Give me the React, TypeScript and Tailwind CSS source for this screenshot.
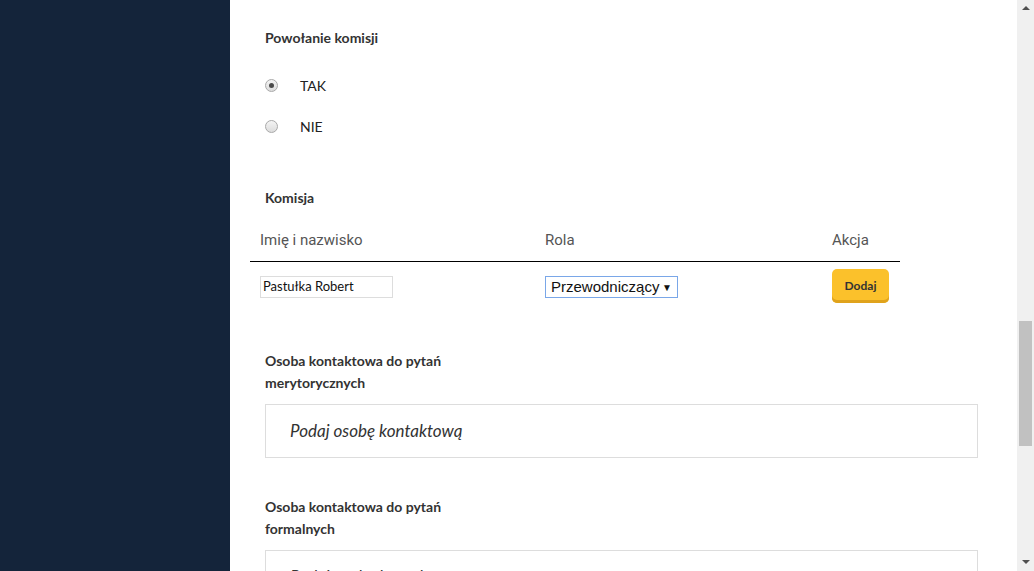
import React from "react";

const Radio = ({ checked }: { checked?: boolean }) => (
  <span className="flex h-[13px] w-[13px] items-center justify-center rounded-full border border-[#a9a9a9] bg-gradient-to-b from-[#f4f4f4] to-[#dcdcdc]">
    {checked ? <span className="h-[5px] w-[5px] rounded-full bg-[#4a4a4a]" /> : null}
  </span>
);

const ContactField = ({ label }: { label: string }) => (
  <div className="flex flex-col">
    <div className="w-[200px] text-[14px] font-bold leading-[22px] text-[#333]">{label}</div>
    <div className="mt-[10px] flex h-[54px] items-center border border-[#dddddd] pl-[24px] text-[17px] italic text-[#333]">
      Podaj osobę kontaktową
    </div>
  </div>
);

const App = () => {
  return (
    <div className="flex h-[571px] w-full overflow-hidden bg-white font-['Lato',sans-serif]">
      <aside className="w-[230px] shrink-0 bg-[#14243a]" />

      <main className="flex flex-1 flex-col pl-[35px] pr-[39px] pt-[29px]">
        <div className="text-[14px] font-bold leading-[18px] text-[#333]">Powołanie komisji</div>

        <div className="mt-[29px] flex flex-col gap-[23px]">
          <label className="flex h-[18px] items-center">
            <Radio checked />
            <span className="ml-[22px] text-[14px] text-[#222]">TAK</span>
          </label>
          <label className="flex h-[18px] items-center">
            <Radio />
            <span className="ml-[22px] text-[14px] text-[#222]">NIE</span>
          </label>
        </div>

        <div className="mt-[54px] text-[14px] font-bold leading-[18px] text-[#333]">Komisja</div>

        <div className="-ml-[15px] mt-[12px] w-[650px]">
          <div className="grid h-[43px] grid-cols-[285px_287px_78px] items-center border-b border-black pl-[10px] font-['Roboto',sans-serif] text-[15px] text-[#555]">
            <span>Imię i nazwisko</span>
            <span>Rola</span>
            <span>Akcja</span>
          </div>
          <div className="grid grid-cols-[285px_287px_78px] items-start pl-[10px] pt-[7px]">
            <div className="mt-[7px] flex h-[22px] w-[133px] items-center border border-[#dddddd] pl-[2px] text-[13px] text-[#111]">
              Pastułka Robert
            </div>
            <div className="mt-[7px] flex h-[22px] w-[133px] items-center justify-between border border-[#7aa7e8] px-[5px] font-['Liberation_Sans',sans-serif] text-[15px] text-[#111]">
              <span>Przewodniczący</span>
              <span className="text-[10px]">▼</span>
            </div>
            <button className="h-[34px] w-[57px] rounded-[5px] bg-[#fbc12b] text-[12px] font-bold text-[#333] shadow-[inset_0_-3px_0_#e0a31c]">
              Dodaj
            </button>
          </div>
        </div>

        <div className="mt-[47px] flex flex-col gap-[38px]">
          <ContactField label="Osoba kontaktowa do pytań merytorycznych" />
          <ContactField label="Osoba kontaktowa do pytań formalnych" />
        </div>
      </main>

      <div className="flex w-[17px] shrink-0 flex-col items-center bg-[#f0f0f0]">
        <span className="mt-[6px] h-0 w-0 border-x-[4px] border-b-[4px] border-x-transparent border-b-[#505050]" />
        <div className="mt-[311px] h-[125px] w-[13px] bg-[#c1c1c1]" />
        <span className="mt-auto mb-[7px] h-0 w-0 border-x-[4px] border-t-[4px] border-x-transparent border-t-[#505050]" />
      </div>
    </div>
  );
};

export default App;
